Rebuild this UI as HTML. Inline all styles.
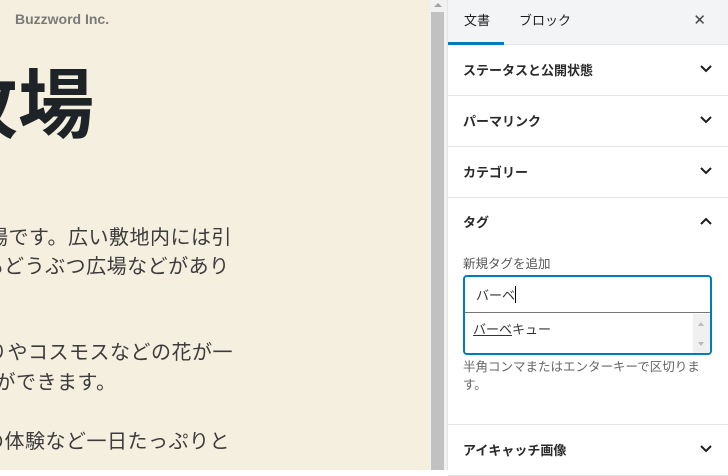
<!DOCTYPE html>
<html><head><meta charset="utf-8"><style>
*{margin:0;padding:0;box-sizing:border-box}
body{width:728px;height:470px;overflow:hidden;position:relative;font-family:"Liberation Sans","Noto Sans CJK JP",sans-serif;background:#fff}
.left{position:absolute;left:0;top:0;width:430px;height:470px;background:#f5efe0;overflow:hidden}
.brand{position:absolute;left:15px;top:11px;font-size:14px;font-weight:bold;color:#7a7a7a}
.h{position:absolute;left:-58px;top:62px;font-size:76px;font-weight:bold;color:#1d2327;white-space:nowrap;line-height:90px}
.p{position:absolute;font-size:20px;letter-spacing:0.5px;color:#3c3c3c;white-space:nowrap;line-height:29px}
.sb{position:absolute;left:430px;top:0;width:17px;height:470px;background:#f1f1f1}
.sb .th{position:absolute;left:1px;top:12px;width:13px;height:458px;background:#c1c1c1}
.sb .ar{position:absolute;left:4px;top:3px;width:0;height:0;border-left:4px solid transparent;border-right:4px solid transparent;border-bottom:4px solid #a3a3a3}
.side{position:absolute;left:447px;top:0;width:281px;height:470px;background:#fff;border-left:1px solid #e2e4e7}
.hdr{height:45px;background:#f3f4f5;border-bottom:1px solid #e2e4e7;position:relative}
.tab{position:absolute;top:10px;font-size:13px;color:#1e1e1e}
.ul{position:absolute;left:0;top:42px;width:56px;height:3px;background:#007cba}
.x{position:absolute;right:22px;top:11px;font-size:15px;color:#444}
.pan{position:relative;height:51px;border-bottom:1px solid #e2e4e7}
.pan .t{position:absolute;left:15px;top:15px;font-size:13px;font-weight:bold;color:#2a2a2a}
.chev{position:absolute;right:16px;top:20px}
</style></head><body>
<div class="left">
<div class="brand">Buzzword Inc.</div>
<div class="h">牧場</div>
<div class="p" style="left:-12px;top:224px">場です。広い敷地内には引</div>
<div class="p" style="left:-16px;top:253px">もどうぶつ広場などがあり</div>
<div class="p" style="left:-13px;top:339px">りやコスモスなどの花が一</div>
<div class="p" style="left:-25px;top:369px">とができます。</div>
<div class="p" style="left:-16px;top:428px">の体験など一日たっぷりと</div>
</div>
<div class="sb"><div class="ar"></div><div class="th"></div></div>
<div class="side">
<div class="hdr"><span class="tab" style="left:16px">文書</span><span class="tab" style="left:71px">ブロック</span><div class="ul"></div><span class="x">✕</span></div>
<div class="pan"><span class="t">ステータスと公開状態</span><svg class="chev" width="12" height="8" viewBox="0 0 12 8"><path d="M1 1l5 5 5-5" fill="none" stroke="#1e1e1e" stroke-width="2"/></svg></div>
<div class="pan"><span class="t">パーマリンク</span><svg class="chev" width="12" height="8" viewBox="0 0 12 8"><path d="M1 1l5 5 5-5" fill="none" stroke="#1e1e1e" stroke-width="2"/></svg></div>
<div class="pan"><span class="t">カテゴリー</span><svg class="chev" width="12" height="8" viewBox="0 0 12 8"><path d="M1 1l5 5 5-5" fill="none" stroke="#1e1e1e" stroke-width="2"/></svg></div>
<div class="pan" style="height:227px"><span class="t" style="top:14px">タグ</span><svg class="chev" width="12" height="8" viewBox="0 0 12 8" style="top:19px"><path d="M1 7l5-5 5 5" fill="none" stroke="#1e1e1e" stroke-width="2"/></svg>
<div style="position:absolute;left:15px;top:55px;font-size:12.5px;color:#555">新規タグを追加</div>
<div style="position:absolute;left:15px;top:77px;width:249px;height:80px;border:2px solid #007cba;border-radius:4px;overflow:hidden">
<div style="height:36px;border-bottom:1px solid #757575;padding:8px 0 0 11px;font-size:13px;color:#333">バーベ<span style="display:inline-block;width:1px;height:17px;background:#000;vertical-align:-3px"></span></div>
<div style="position:absolute;left:8px;top:42px;font-size:13px;color:#333"><u>バーベ</u>キュー</div>
<div style="position:absolute;right:0;top:37px;width:17px;height:41px;background:#f0f0f0"><div style="position:absolute;left:5px;top:8px;border-left:3px solid transparent;border-right:3px solid transparent;border-bottom:4px solid #bbb"></div><div style="position:absolute;left:5px;top:28px;border-left:3px solid transparent;border-right:3px solid transparent;border-top:4px solid #bbb"></div></div>
</div>
<div style="position:absolute;left:15px;top:160px;width:255px;font-size:12.5px;color:#666;line-height:18px">半角コンマまたはエンターキーで区切ります。</div>
</div>
<div class="pan"><span class="t">アイキャッチ画像</span><svg class="chev" width="12" height="8" viewBox="0 0 12 8"><path d="M1 1l5 5 5-5" fill="none" stroke="#1e1e1e" stroke-width="2"/></svg></div>
</div>
</body></html>
